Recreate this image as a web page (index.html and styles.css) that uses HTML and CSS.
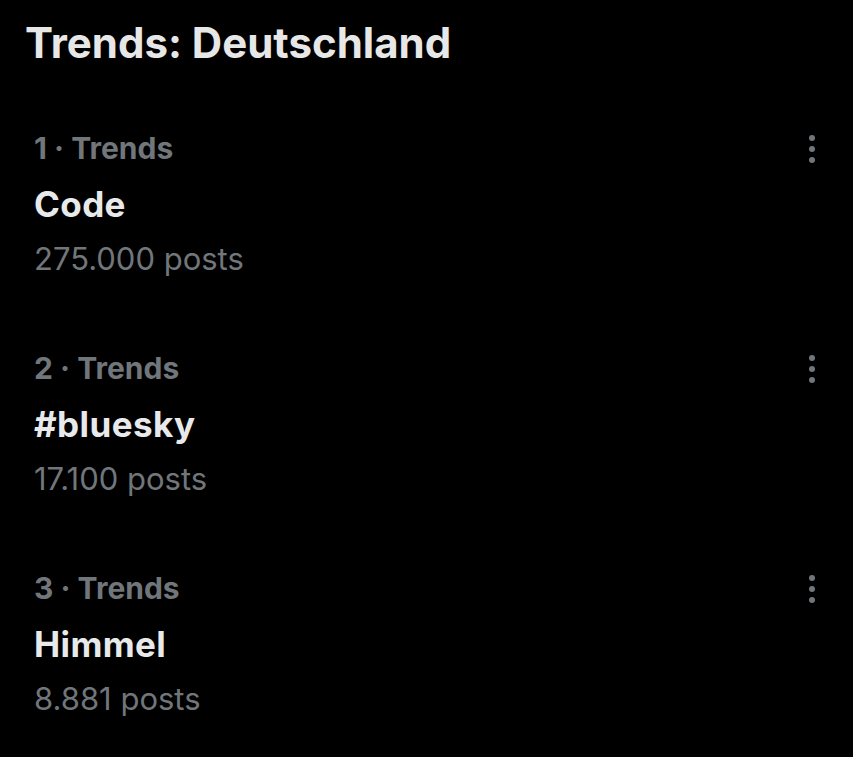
FILE: index.html
```html
<!DOCTYPE html>
<html lang="de">
<head>
<meta charset="utf-8">
<link rel="stylesheet" href="styles.css">
</head>
<body>
<main class="panel">
  <h1 class="heading">Trends: Deutschland</h1>
  <ul class="list">
    <li class="trend">
      <div class="text">
        <div class="meta">1 · Trends</div>
        <div class="name">Code</div>
        <div class="count">275.000 posts</div>
      </div>
      <button class="more" aria-label="Mehr"><span></span><span></span><span></span></button>
    </li>
    <li class="trend">
      <div class="text">
        <div class="meta">2 · Trends</div>
        <div class="name">#bluesky</div>
        <div class="count">17.100 posts</div>
      </div>
      <button class="more" aria-label="Mehr"><span></span><span></span><span></span></button>
    </li>
    <li class="trend">
      <div class="text">
        <div class="meta">3 · Trends</div>
        <div class="name">Himmel</div>
        <div class="count">8.881 posts</div>
      </div>
      <button class="more" aria-label="Mehr"><span></span><span></span><span></span></button>
    </li>
  </ul>
</main>
</body>
</html>
```

FILE: styles.css
```css
html, body {
  margin: 0;
  padding: 0;
  background: #000;
}
body {
  font-family: Inter, "Liberation Sans", Arial, sans-serif;
  color: #e7e9ea;
  width: 853px;
  height: 757px;
  overflow: hidden;
}
.heading {
  margin: 0;
  padding: 21px 0 0 25px;
  font-size: 42px;
  line-height: 44px;
  font-weight: 700;
  color: #e7e7e7;
}
.list {
  list-style: none;
  margin: 0;
  padding: 0;
  margin-top: 56px;
}
.trend {
  display: flex;
  justify-content: space-between;
  align-items: flex-start;
  padding: 0 38px 0 34px;
  height: 220px;
}
.text {
  display: flex;
  flex-direction: column;
}
.meta {
  font-size: 30px;
  line-height: 55px;
  font-weight: 700;
  color: #71767b;
}
.name {
  font-size: 35px;
  line-height: 57px;
  font-weight: 700;
  letter-spacing: 0.4px;
  color: #e7e9ea;
}
.count {
  font-size: 31px;
  line-height: 52px;
  color: #71767b;
}
.more {
  background: none;
  border: 0;
  padding: 0;
  margin-top: 14px;
  display: flex;
  flex-direction: column;
  gap: 5px;
  align-items: center;
}
.more span {
  width: 6px;
  height: 6px;
  border-radius: 50%;
  background: #71767b;
}
```
